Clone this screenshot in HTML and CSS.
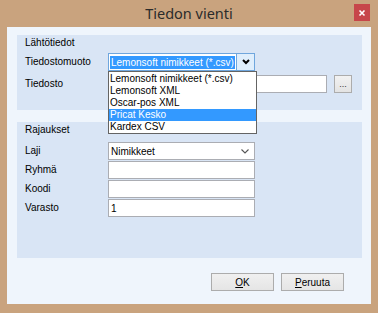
FILE: index.html
```html
<!DOCTYPE html>
<html lang="fi">
<head>
<meta charset="utf-8">
<title>Tiedon vienti</title>
<link rel="stylesheet" href="styles.css">
</head>
<body>
<div class="window">
  <div class="titlebar">
    <span class="title">Tiedon vienti</span>
    <span class="close">
      <svg width="8" height="8" viewBox="0 0 8 8"><path d="M1.5 1.5 L6.5 6.5 M6.5 1.5 L1.5 6.5" stroke="#fff" stroke-width="1.6"/></svg>
    </span>
  </div>
  <div class="client">
    <div class="group g1">
      <div class="gtitle">Lähtötiedot</div>
      <div class="rows">
        <label class="lbl">Tiedostomuoto</label>
        <div class="combo focused">
          <span class="sel">Lemonsoft nimikkeet (*.csv)</span>
          <span class="dropbtn">
            <svg width="8" height="6" viewBox="0 0 8 6"><path d="M1 1 L4 4 L7 1" fill="none" stroke="#000" stroke-width="2"/></svg>
          </span>
          <ul class="droplist">
            <li>Lemonsoft nimikkeet (*.csv)</li>
            <li>Lemonsoft XML</li>
            <li>Oscar-pos XML</li>
            <li class="hl">Pricat Kesko</li>
            <li>Kardex CSV</li>
          </ul>
        </div>
        <label class="lbl">Tiedosto</label>
        <div class="filerow">
          <div class="box wide"></div>
          <button class="browse">...</button>
        </div>
      </div>
    </div>
    <div class="group g2">
      <div class="gtitle">Rajaukset</div>
      <div class="rows tight">
        <label class="lbl">Laji</label>
        <div class="combo plain">
          <span class="val">Nimikkeet</span>
          <svg class="chev" width="8" height="5" viewBox="0 0 8 5"><path d="M0.5 0.5 L4 4 L7.5 0.5" fill="none" stroke="#555" stroke-width="1.1"/></svg>
        </div>
        <label class="lbl">Ryhmä</label>
        <div class="box"></div>
        <label class="lbl">Koodi</label>
        <div class="box"></div>
        <label class="lbl">Varasto</label>
        <div class="box"><span class="val">1</span></div>
      </div>
    </div>
    <div class="buttons">
      <button class="btn"><u>O</u>K</button>
      <button class="btn"><u>P</u>eruuta</button>
    </div>
  </div>
</div>
</body>
</html>
```
FILE: styles.css
```css
html, body {
  margin: 0;
  padding: 0;
  background: #c9a37e;
}
body {
  width: 378px;
  height: 313px;
  overflow: hidden;
  font-family: "Liberation Sans", Arial, sans-serif;
  font-size: 10px;
  color: #000;
}
.window {
  width: 378px;
  height: 313px;
  box-sizing: border-box;
  background: #c9a37e;
  padding: 0 7px 9px 7px;
  display: flex;
  flex-direction: column;
}
.titlebar {
  height: 27px;
  flex: none;
  display: flex;
  align-items: center;
  justify-content: center;
  position: relative;
}
.title {
  font-family: "Noto Sans", "Open Sans", sans-serif;
  font-size: 14.5px;
  color: #2b2b2b;
  margin-top: -1px;
}
.close {
  position: absolute;
  right: 1px;
  top: 4px;
  width: 16px;
  height: 17px;
  background: #c7464a;
  display: flex;
  align-items: center;
  justify-content: center;
}
.client {
  flex: 1;
  background: #eff5fc;
  padding: 8px 9px 0 10px;
  display: flex;
  flex-direction: column;
}
.group {
  background: #d9e5f5;
  padding: 1px 8px 0 8px;
  box-sizing: border-box;
}
.g1 {
  height: 75px;
}
.g2 {
  height: 136px;
  margin-top: 12px;
}
.gtitle {
  height: 14px;
  line-height: 14px;
}
.rows {
  display: grid;
  grid-template-columns: 83px 1fr;
  grid-auto-rows: 18px;
  row-gap: 4px;
  margin-top: 3px;
  align-items: center;
}
.rows.tight {
  row-gap: 1px;
  margin-top: 5px;
}
.lbl {
  line-height: 18px;
}
.combo {
  width: 147px;
  height: 18px;
  box-sizing: border-box;
  background: #fff;
  border: 1px solid #abadb3;
  display: flex;
  align-items: center;
  position: relative;
}
.combo.focused {
  border-color: #6fa6dd;
}
.sel {
  margin-left: 1px;
  background: #3399ff;
  color: #fff;
  line-height: 13px;
  padding: 0 1px;
}
.dropbtn {
  position: absolute;
  right: 0;
  top: 0;
  width: 17px;
  height: 16px;
  background: #dfeefc;
  border-left: 1px solid #6fa6dd;
  display: flex;
  align-items: center;
  justify-content: center;
}
.droplist {
  position: absolute;
  left: -1px;
  top: 17px;
  width: 149px;
  box-sizing: border-box;
  margin: 0;
  padding: 1px 0 0 0;
  list-style: none;
  background: #fff;
  border: 1px solid #646464;
  z-index: 2;
}
.droplist li {
  height: 12px;
  line-height: 12px;
  padding-left: 1px;
}
.droplist li.hl {
  background: #3399ff;
  color: #fff;
}
.val {
  padding-left: 2px;
}
.chev {
  position: absolute;
  right: 5px;
  top: 6px;
}
.filerow {
  display: flex;
  align-items: center;
  gap: 7px;
}
.box {
  width: 147px;
  height: 18px;
  box-sizing: border-box;
  background: #fff;
  border: 1px solid #abadb3;
  display: flex;
  align-items: center;
}
.box.wide {
  width: 219px;
}
.browse {
  width: 18px;
  height: 18px;
  padding: 0;
  border: 1px solid #acacac;
  background: linear-gradient(#f2f2f2, #e3e3e3);
  font-family: "Liberation Sans", Arial, sans-serif;
  font-size: 9px;
  line-height: 12px;
  color: #333;
}
.buttons {
  display: flex;
  justify-content: flex-end;
  gap: 7px;
  margin-top: 15px;
  padding-right: 18px;
}
.btn {
  width: 63px;
  height: 18px;
  padding: 0;
  border: 1px solid #acacac;
  background: linear-gradient(#f0f0f0, #e5e5e5);
  font-family: "Liberation Sans", Arial, sans-serif;
  font-size: 10px;
  color: #000;
}
```
